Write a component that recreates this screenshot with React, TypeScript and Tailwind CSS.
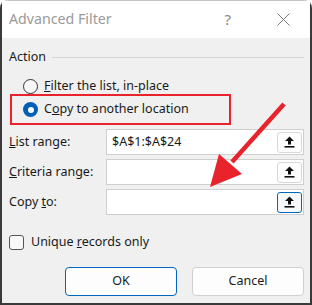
export default function App() {
  const font = { fontFamily: '"Segoe UI", "Noto Sans", sans-serif' };

  const UploadIcon = () => (
    <svg width="11" height="12" viewBox="0 0 11 12">
      <path d="M5.5 0.5 L10 5 L7 5 L7 8.5 L4 8.5 L4 5 L1 5 Z" fill="#111" />
      <rect x="0.5" y="10" width="10" height="1.6" fill="#111" />
    </svg>
  );

  const rows = [
    { label: <><u>L</u>ist range:</>, value: "$A$1:$A$24", focus: false },
    { label: <><u>C</u>riteria range:</>, value: "", focus: false },
    { label: <>Copy <u>t</u>o:</>, value: "", focus: true },
  ];

  return (
    <div className="relative w-[312px] h-[305px] overflow-hidden bg-white" style={font}>
      <div className="w-full h-full flex flex-col rounded-t-[8px] border-t border-t-[#c4c4c4] border-l-2 border-r-2 border-b-2 border-l-[#3a3a3a] border-r-[#3a3a3a] border-b-[#3a3a3a]">
        {/* Title bar */}
        <div className="h-[37px] bg-white flex items-center pl-[7px] shrink-0">
          <span className="text-[14.2px] text-[#9a9a9a] leading-none">Advanced Filter</span>
          <span className="ml-auto text-[15px] text-[#8a8a8a] leading-none mr-[46px]">?</span>
          <svg width="13" height="13" viewBox="0 0 13 13" className="mr-[20px]">
            <path d="M0.5 0.5 L12.5 12.5 M12.5 0.5 L0.5 12.5" stroke="#7a7a7a" strokeWidth="1" />
          </svg>
        </div>

        {/* Body */}
        <div className="flex-1 bg-[#f0f0f0] pl-[7px] pr-[6px] flex flex-col text-[12.5px] text-[#1a1a1a]">
          <div className="h-[18px] mt-[10px] flex items-center gap-[6px] leading-none">
            <span>Action</span>
            <div className="flex-1 h-px bg-[#d6d6d6]" />
          </div>

          <div className="h-[16px] mt-[12px] flex items-center pl-[14px] gap-[6px]">
            <div className="w-[15px] h-[15px] rounded-full border border-[#333] bg-[#f7f7f7]" />
            <span><u>F</u>ilter the list, in-place</span>
          </div>

          <div className="w-[221px] h-[31px] ml-[1px] border-2 border-[#e8232c] flex items-center pl-[11px] gap-[6px]">
            <div className="w-[15px] h-[15px] rounded-full bg-[#005fb8] flex items-center justify-center">
              <div className="w-[6px] h-[6px] rounded-full bg-white" />
            </div>
            <span>C<u>o</u>py to another location</span>
          </div>

          <div className="mt-[4px] flex flex-col gap-[4px]">
            {rows.map((r, i) => (
              <div key={i} className="flex items-center h-[26px]">
                <span className="w-[97px] shrink-0">{r.label}</span>
                <div className="flex-1 h-full bg-white border border-[#cfcfcf] flex items-center pl-[5px] pr-[1px]">
                  <span className="flex-1">{r.value}</span>
                  <div
                    className={
                      r.focus
                        ? "w-[25px] h-[21px] rounded-[3px] border border-[#0067c0] bg-[#f6f9fc] flex items-center justify-center"
                        : "w-[25px] h-[21px] rounded-[3px] border border-[#d8d8d8] bg-[#fdfdfd] flex items-center justify-center"
                    }
                  >
                    <UploadIcon />
                  </div>
                </div>
              </div>
            ))}
          </div>

          <div className="h-[16px] mt-[19px] flex items-center gap-[7px]">
            <div className="w-[15px] h-[15px] rounded-[3px] border border-[#555] bg-[#f9f9f9]" />
            <span>Unique <u>r</u>ecords only</span>
          </div>

          <div className="mt-[17px] flex justify-end gap-[15px]">
            <button className="w-[112px] h-[29px] rounded-[4px] border border-[#0067c0] bg-[#fdfdfd] text-[12.5px] text-[#1a1a1a]">
              OK
            </button>
            <button className="w-[112px] h-[29px] rounded-[4px] border border-[#d0d0d0] bg-[#fdfdfd] text-[12.5px] text-[#1a1a1a]">
              Cancel
            </button>
          </div>
        </div>
      </div>

      {/* Red annotation arrow */}
      <svg className="absolute left-0 top-0 pointer-events-none" width="312" height="305">
        <line x1="284" y1="104" x2="232" y2="162" stroke="#e8232c" strokeWidth="4.5" />
        <polygon points="210,187 219,154 242,174" fill="#e8232c" />
      </svg>
    </div>
  );
}
